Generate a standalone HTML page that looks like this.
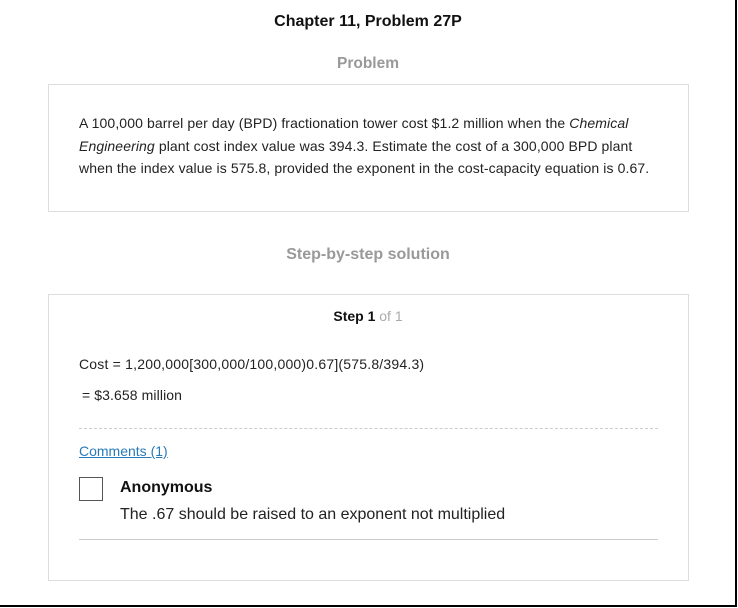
<!DOCTYPE html>
<html><head><meta charset="utf-8"><style>
html,body{margin:0;padding:0;background:#fff}
body{width:738px;height:608px;position:relative;overflow:hidden;font-family:"Liberation Sans",Arial,sans-serif;color:#222}
.frame{position:absolute;left:0;top:0;width:735px;height:605px;border-right:2px solid #000;border-bottom:2px solid #000}
.a{position:absolute;white-space:nowrap}
.box{position:absolute;left:48px;width:639px;border:1px solid #ddd;background:#fff}
.t13{font-size:14px;letter-spacing:0.1px}
</style></head><body>
<div class="frame"></div>
<div class="a" style="left:0;width:736px;text-align:center;top:13px;font-size:16px;font-weight:bold;color:#111">Chapter 11, Problem 27P</div>
<div class="a" style="left:0;width:736px;text-align:center;top:55px;font-size:15.5px;font-weight:bold;color:#999">Problem</div>
<div class="box" style="top:84px;height:126px"></div>
<div class="a t13" style="left:79px;top:112px;line-height:22.5px;color:#222">A 100,000 barrel per day (BPD) fractionation tower cost $1.2 million when the <i>Chemical</i><br><i>Engineering</i> plant cost index value was 394.3. Estimate the cost of a 300,000 BPD plant<br>when the index value is 575.8, provided the exponent in the cost-capacity equation is 0.67.</div>
<div class="a" style="left:0;width:736px;text-align:center;top:246px;font-size:16px;font-weight:bold;color:#999">Step-by-step solution</div>
<div class="box" style="top:294px;height:285px"></div>
<div class="a" style="left:0;width:736px;text-align:center;top:308px;font-size:14px;font-weight:bold;color:#111">Step 1 <span style="font-weight:normal;color:#aaa">of 1</span></div>
<div class="a t13" style="left:79px;top:356px;letter-spacing:0.2px">Cost = 1,200,000[300,000/100,000)0.67](575.8/394.3)</div>
<div class="a t13" style="left:82px;top:387px">= $3.658 million</div>
<div class="a" style="left:79px;top:428px;width:579px;border-top:1px dashed #ccc"></div>
<div class="a" style="left:79px;top:443px;font-size:14px;color:#2a7ab8;text-decoration:underline">Comments (1)</div>
<div class="a" style="left:79px;top:477px;width:22px;height:22px;border:1px solid #555"></div>
<div class="a" style="left:120px;top:479px;font-size:16px;font-weight:bold;color:#111">Anonymous</div>
<div class="a" style="left:120px;top:506px;font-size:16px;color:#222">The .67 should be raised to an exponent not multiplied</div>
<div class="a" style="left:79px;top:539px;width:579px;border-top:1px solid #ccc"></div>
</body></html>
